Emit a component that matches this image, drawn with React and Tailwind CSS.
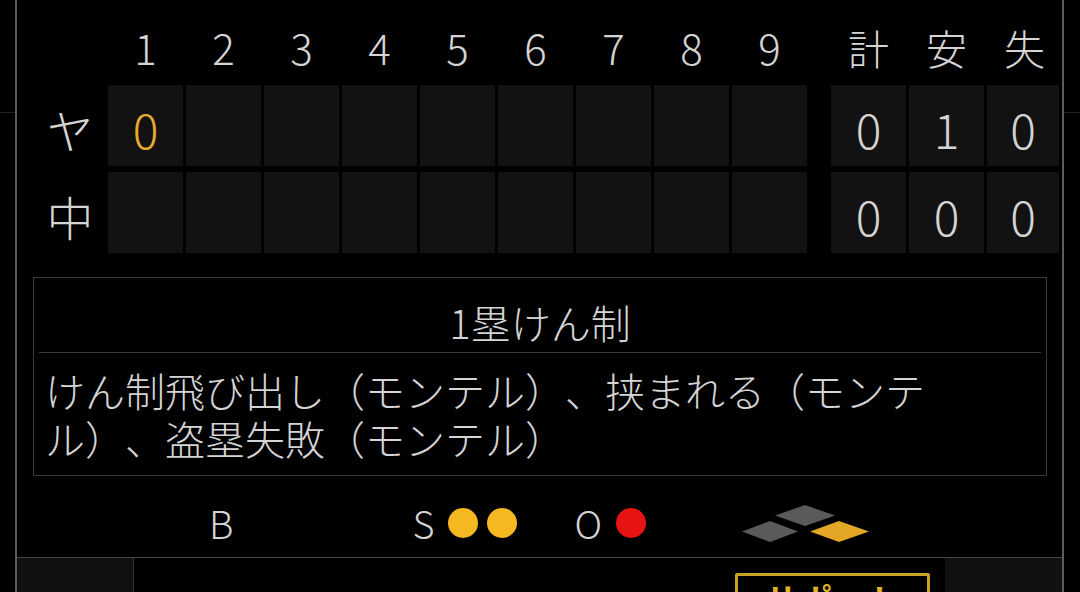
import React from 'react';

const FONT = { fontFamily: '"Noto Sans CJK JP", "Noto Sans", sans-serif' };

const innings = [1, 2, 3, 4, 5, 6, 7, 8, 9];

const teams = [
    { name: 'ヤ', scores: ['0', '', '', '', '', '', '', '', ''], totals: ['0', '1', '0'] },
    { name: '中', scores: ['', '', '', '', '', '', '', '', ''], totals: ['0', '0', '0'] },
];

// label | 9 innings | spacer | 計 安 失
const GRID = 'grid grid-cols-[88px_repeat(9,75px)_18px_repeat(3,75px)] gap-x-[3px]';

const CountGroup = ({ label, slots, on, color }) => (
    <div className="flex items-center">
        <span className="text-[38px] leading-none">{label}</span>
        <div className="flex gap-[9px] ml-[14px]">
            {Array.from({ length: slots }).map((_, i) => (
                <span key={i} className={`w-[30px] h-[30px] rounded-full ${i < on ? color : ''}`} />
            ))}
        </div>
    </div>
);

const Bases = () => (
    <svg width="128" height="39" viewBox="0 0 128 39">
        <polygon points="33,11.5 63,1 93,11.5 63,22" fill="#5a5a5a" />
        <polygon points="0,27.5 28,17 56,27.5 28,38" fill="#5a5a5a" />
        <polygon points="68,27.5 97,17 127,27.5 97,38" fill="#e3a625" />
    </svg>
);

const App = () => {
    return (
        <div className="w-[1080px] h-[592px] bg-black flex overflow-hidden text-[#d4d4d4] font-light" style={FONT}>
            {/* left edge strip */}
            <div className="w-[15px] shrink-0">
                <div className="h-[113px] border-b border-[#222]" />
            </div>

            <div className="w-[1049px] shrink-0 border-l-2 border-r-2 border-[#5c5c5c] flex flex-col overflow-hidden">
                {/* scoreboard */}
                <div className={`${GRID} h-[85px] shrink-0 pt-[9px]`}>
                    <div />
                    {innings.map((n) => (
                        <div key={n} className="flex items-center justify-center text-[42px] leading-none">{n}</div>
                    ))}
                    <div />
                    {['計', '安', '失'].map((h) => (
                        <div key={h} className="flex items-center justify-center text-[41px] leading-none">{h}</div>
                    ))}
                </div>

                <div className="flex flex-col gap-[6px] shrink-0">
                    {teams.map((t) => (
                        <div key={t.name} className={`${GRID} h-[81px]`}>
                            <div className="flex items-center justify-center pl-[18px] text-[47px] leading-none pt-[6px]">{t.name}</div>
                            {t.scores.map((s, i) => (
                                <div key={i} className="bg-[#121212] flex items-center justify-center text-[48px] leading-none pt-[5px] text-[#e8ac2e]">{s}</div>
                            ))}
                            <div />
                            {t.totals.map((s, i) => (
                                <div key={i} className={`bg-[#121212] flex items-center justify-center text-[48px] leading-none pt-[5px] ${i === 2 ? 'mr-[3px]' : ''}`}>{s}</div>
                            ))}
                        </div>
                    ))}
                </div>

                {/* play description */}
                <div className="shrink-0 mt-[24px] ml-[16px] mr-[15px] h-[199px] border border-[#3a3a3a] px-[5px] [text-spacing-trim:space-all]">
                    <div className="h-[75px] border-b border-[#3a3a3a] pt-[20px] text-center text-[40px] leading-[48px]">1塁けん制</div>
                    <div className="pt-[13px] pl-[6px] text-[40px] leading-[48px] whitespace-nowrap">
                        <p>けん制飛び出し（モンテル）、挟まれる（モンテ</p>
                        <p>ル）、盗塁失敗（モンテル）</p>
                    </div>
                </div>

                {/* ball / strike / out / bases */}
                <div className="shrink-0 h-[81px] pt-[13px] flex items-center justify-center gap-[57px]">
                    <CountGroup label="B" slots={3} on={0} color="bg-[#f5b821]" />
                    <CountGroup label="S" slots={2} on={2} color="bg-[#f5b821]" />
                    <CountGroup label="O" slots={2} on={1} color="bg-[#e81414]" />
                    <Bases />
                </div>

                {/* bottom bar */}
                <div className="flex-1 min-h-0 border-t border-[#444] flex overflow-hidden">
                    <div className="w-[117px] shrink-0 bg-[#111] border-r border-[#333]" />
                    <div className="flex-1" />
                    <div className="w-[195px] h-[60px] shrink-0 mt-[15px] border-[3px] border-[#c9a222] rounded-[2px] pt-[7px] text-center text-[34px] leading-none font-bold text-[#e0b324]">
                        サポート
                    </div>
                    <div className="w-[117px] shrink-0 ml-[15px] bg-[#111]" />
                </div>
            </div>

            {/* right edge strip */}
            <div className="flex-1">
                <div className="h-[113px] border-b border-[#222]" />
            </div>
        </div>
    );
};

export default App;
